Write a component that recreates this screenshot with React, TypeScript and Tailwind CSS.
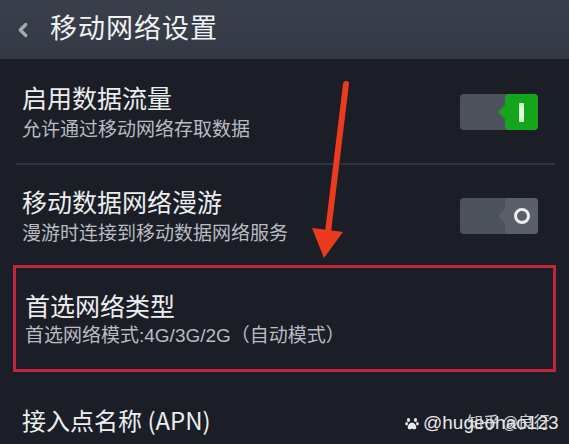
import { ChevronLeft } from 'lucide-react';

const font = { fontFamily: '"Noto Sans CJK SC", "Noto Sans", sans-serif' };

function Toggle({ on }: { on: boolean }) {
  return (
    <div className="relative w-[78px] h-[36px] rounded-[4px] bg-[#4d535d] flex justify-end">
      <div
        className={`relative w-[33px] h-full rounded-[4px] flex items-center justify-center ${
          on ? 'bg-[#14a51c]' : 'bg-[#5a6069]'
        }`}
      >
        {/* little notch pointing left */}
        <div
          className={`absolute -left-[7px] top-1/2 -translate-y-1/2 w-0 h-0 border-y-[7px] border-y-transparent border-r-[7px] ${
            on ? 'border-r-[#14a51c]' : 'border-r-[#5a6069]'
          }`}
        />
        {on ? (
          <div className="w-[5px] h-[19px] bg-[#d8ffd0] rounded-[1px]" />
        ) : (
          <div className="w-[16px] h-[16px] rounded-full border-[3px] border-[#eceef0]" />
        )}
      </div>
    </div>
  );
}

function Row({ title, sub, toggle }: { title: string; sub: string; toggle?: boolean }) {
  return (
    <div className="flex items-center justify-between h-[102px] pl-[22px] pr-[31px]">
      <div className="flex flex-col gap-[2px] -mt-[4px]">
        <p className="text-[25px] leading-[32px] text-[#eceef0]">{title}</p>
        <p className="text-[19px] leading-[25px] text-[#b9bcc2]">{sub}</p>
      </div>
      {toggle !== undefined && <Toggle on={toggle} />}
    </div>
  );
}

function Paw() {
  return (
    <svg width="14" height="14" viewBox="0 0 14 14" fill="#e8e9ec">
      <ellipse cx="3.5" cy="4" rx="1.6" ry="2" />
      <ellipse cx="10.5" cy="4" rx="1.6" ry="2" />
      <ellipse cx="1.6" cy="7.8" rx="1.4" ry="1.7" />
      <ellipse cx="12.4" cy="7.8" rx="1.4" ry="1.7" />
      <path d="M7 6.5c-2.4 0-4.3 3-4.3 4.9 0 1.4 1.2 1.9 2.2 1.9.9 0 1.4-.5 2.1-.5s1.2.5 2.1.5c1 0 2.2-.5 2.2-1.9 0-1.9-1.9-4.9-4.3-4.9z" />
    </svg>
  );
}

export default function App() {
  return (
    <div className="relative w-[569px] h-[444px] overflow-hidden bg-[#1b1e26]" style={font}>
      <header className="h-[59px] bg-gradient-to-b from-[#3a404b] to-[#333944] flex items-center gap-[16px] pl-[12px]">
        <ChevronLeft className="w-[22px] h-[22px] text-[#a5aab2]" strokeWidth={3.5} />
        <h1 className="text-[27px] text-[#f0f2f4] tracking-[1px] -mt-[4px]">移动网络设置</h1>
      </header>

      <div className="pt-[2px]">
        <Row title="启用数据流量" sub="允许通过移动网络存取数据" toggle={true} />
        <div className="ml-[16px] mr-[14px] h-[2px] bg-[#30333b]" />
        <Row title="移动数据网络漫游" sub="漫游时连接到移动数据网络服务" toggle={false} />

        <div className="mx-[13px] -mt-[2px] h-[107px] border-[3px] border-[#c02539] flex flex-col justify-center pl-[9px] gap-[2px]">
          <p className="text-[25px] leading-[32px] text-[#eceef0]">首选网络类型</p>
          <p
            className="text-[19px] leading-[25px] text-[#b9bcc2]"
            style={{ fontFamily: '"Liberation Sans", "Noto Sans CJK SC", sans-serif' }}
          >
            首选网络模式:4G/3G/2G（自动模式）
          </p>
        </div>

        <div className="pl-[22px] pt-[32px]">
          <p className="text-[24px] leading-[32px] text-[#eceef0]">接入点名称 (APN)</p>
        </div>
      </div>

      {/* annotation arrow */}
      <svg className="absolute left-0 top-0 pointer-events-none" width="569" height="444">
        <line x1="346" y1="84" x2="328" y2="232" stroke="#ec3a1e" strokeWidth="6" strokeLinecap="round" />
        <polygon points="312,228 343,232 324,258" fill="#ec3a1e" />
      </svg>

      {/* watermarks */}
      <div
        className="absolute left-[405px] top-[409px] flex items-center gap-[4px] text-[19px] text-[#e8e9ec]"
        style={{ fontFamily: '"Liberation Sans", sans-serif' }}
      >
        <Paw />
        <span>@hugeohao123</span>
      </div>
      <div className="absolute left-[467px] top-[409px] text-[16px] text-[#dfe1e4] opacity-90">
        知乎 @良行
      </div>
    </div>
  );
}
